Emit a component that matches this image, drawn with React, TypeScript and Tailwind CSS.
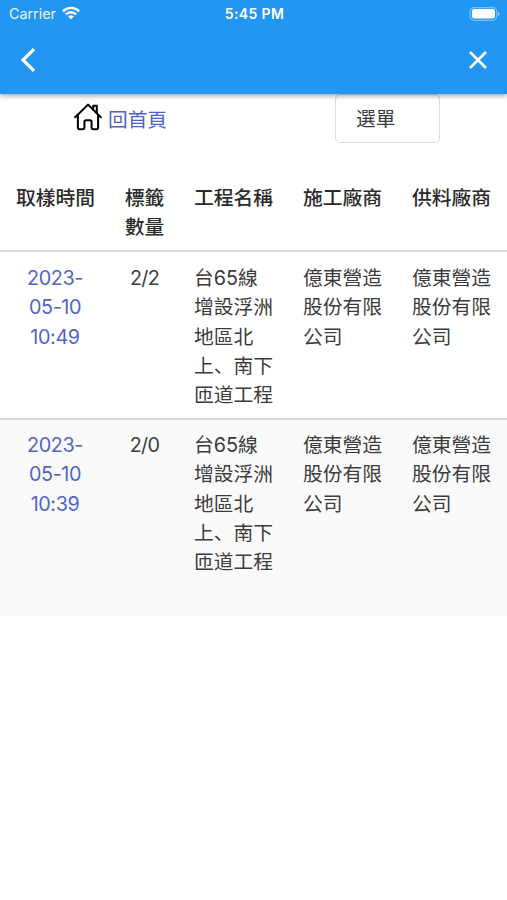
interface Registro {
    hora: string[]
    cantidad: string
    obra: string[]
    constructora: string[]
    proveedor: string[]
}

const registros: Registro[] = [
    {
        hora: ["2023-", "05-10", "10:49"],
        cantidad: "2/2",
        obra: ["台65線", "增設浮洲", "地區北", "上、南下", "匝道工程"],
        constructora: ["億東營造", "股份有限", "公司"],
        proveedor: ["億東營造", "股份有限", "公司"],
    },
    {
        hora: ["2023-", "05-10", "10:39"],
        cantidad: "2/0",
        obra: ["台65線", "增設浮洲", "地區北", "上、南下", "匝道工程"],
        constructora: ["億東營造", "股份有限", "公司"],
        proveedor: ["億東營造", "股份有限", "公司"],
    },
]

function Lines({ items }: { items: string[] }) {
    return (
        <>
            {items.map((item, i) => (
                <span key={i} className="block whitespace-nowrap">{item}</span>
            ))}
        </>
    )
}

function StatusBar() {
    return (
        <div className="grid grid-cols-3 items-center h-[27px] pl-[9px] pr-[7px] text-[14px] leading-none">
            <div className="flex items-center gap-[6px]">
                <span className="pt-px text-[14.3px] text-white/90">Carrier</span>
                <svg width="18" height="14" viewBox="0 0 19 14" fill="none" stroke="white" strokeWidth="2.5">
                    <path d="M1 5.2C5.8 .4 13.2 .4 18 5.2" />
                    <path d="M4.1 8.5C7.2 5.4 11.8 5.4 14.9 8.5" />
                    <path d="M9.5 13.6L6.5 10.6C8.2 9 10.8 9 12.5 10.6Z" fill="white" stroke="none" />
                </svg>
            </div>
            <span className="text-center font-semibold tracking-[0.35px] whitespace-nowrap">5:45 PM</span>
            <svg className="justify-self-end" width="31" height="14" viewBox="0 0 31 14">
                <rect x="1.2" y=".7" width="26.6" height="12.6" rx="4" fill="none" stroke="white" strokeOpacity=".4" strokeWidth="1.2" />
                <rect x="3" y="2" width="23" height="9.5" rx="2.2" fill="white" />
                <path d="M29 4.8C31 5.4 31 8.6 29 9.2Z" fill="white" fillOpacity=".45" />
            </svg>
        </div>
    )
}

function App() {
    return (
        <div className="w-full min-h-screen bg-white text-[#3c3c3c] font-['Inter','Noto_Sans_CJK_SC',sans-serif]">
            <header className="relative z-10 h-[94px] bg-[#2196f3] text-white shadow-[0_2px_5px_rgba(0,0,0,0.35)]">
                <StatusBar />
                <div className="flex items-center justify-between h-[66px] pl-[20px] pr-[20px]">
                    <svg width="16" height="24" viewBox="0 0 16 24" fill="none" stroke="white" strokeWidth="3.2">
                        <path d="M14 1.2L3 12L14 22.8" />
                    </svg>
                    <svg width="18" height="18" viewBox="0 0 18 18" fill="none" stroke="white" strokeWidth="2.6">
                        <path d="M1 1L17 17M17 1L1 17" />
                    </svg>
                </div>
            </header>

            <div className="flex items-start justify-between h-[78px] pl-[74px] pr-[67px] text-[19.7px] leading-[29.3px]">
                <a href="#" className="flex items-center gap-[6px] pt-[12px] text-[#5064ca]">
                    <svg className="-mt-[7px]" width="28" height="28" viewBox="0 0 28 28" fill="none" stroke="black" strokeWidth="2" strokeLinejoin="round" strokeLinecap="round">
                        <path d="M1.2 14.2L14 1.6L26.8 14.2" />
                        <path d="M3.9 12V24.5Q3.9 26.2 5.6 26.2H9Q10.4 26.2 10.4 24.8V19Q10.4 17.3 12.1 17.3H15.9Q17.6 17.3 17.6 19V24.8Q17.6 26.2 19 26.2H22.4Q24.1 26.2 24.1 24.5V12" />
                        <path d="M19.2 6V2.8H22.8V10" />
                    </svg>
                    <span>回首頁</span>
                </a>
                <button className="w-[105px] h-[49px] pt-[2px] pl-[20px] border border-[#dbdbdb] rounded-[5px] text-left">選單</button>
            </div>

            <table className="w-full table-fixed border-collapse text-[19.8px] leading-[29.3px]">
                <colgroup>
                    <col className="w-[111px]" />
                    <col className="w-[67px]" />
                    <col className="w-[109px]" />
                    <col className="w-[109px]" />
                    <col className="w-[111px]" />
                </colgroup>
                <thead className="[&_th]:pt-[12px] [&_th]:font-medium text-[#2b2b2b]">
                    <tr className="h-[79px] border-b-2 border-[#dbdbdb] align-top text-left">
                        <th className="text-center">取樣時間</th>
                        <th className="text-center"><Lines items={["標籤", "數量"]} /></th>
                        <th className="pl-[16px]">工程名稱</th>
                        <th className="pl-[16px]">施工廠商</th>
                        <th className="pl-[16px]">供料廠商</th>
                    </tr>
                </thead>
                <tbody className="[&_td]:pt-[12px] [&>tr:last-child>td]:pt-[11px]">
                    {registros.map((registro) => (
                        <tr key={registro.hora[2]} className="h-[168px] border-b-2 border-[#dbdbdb] align-top last:h-[197px] last:border-0 last:bg-[#fafafa]">
                            <td className="pr-px text-center tracking-[-0.4px] text-[#5064ca]"><Lines items={registro.hora} /></td>
                            <td className="text-center tracking-[-0.7px]">{registro.cantidad}</td>
                            <td className="pl-[16px]"><Lines items={registro.obra} /></td>
                            <td className="pl-[16px]"><Lines items={registro.constructora} /></td>
                            <td className="pl-[16px]"><Lines items={registro.proveedor} /></td>
                        </tr>
                    ))}
                </tbody>
            </table>
        </div>
    )
}

export default App
